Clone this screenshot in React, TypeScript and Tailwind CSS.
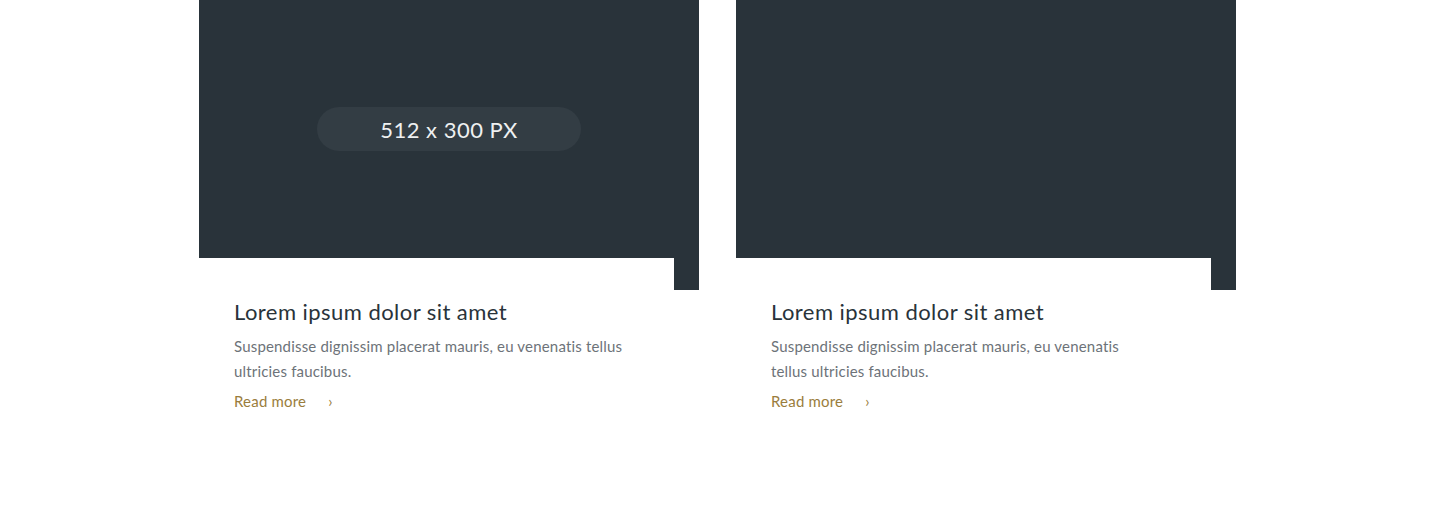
const cards = [
  {
    title: "Lorem ipsum dolor sit amet",
    text: "Suspendisse dignissim placerat mauris, eu venenatis tellus ultricies faucibus.",
    textWidth: "max-w-[400px]",
    label: true,
  },
  {
    title: "Lorem ipsum dolor sit amet",
    text: "Suspendisse dignissim placerat mauris, eu venenatis tellus ultricies faucibus.",
    textWidth: "max-w-[370px]",
    label: false,
  },
];

function Card({ card }: { card: (typeof cards)[number] }) {
  return (
    <div className="w-[500px]">
      <div className="h-[290px] bg-[#29333a] flex items-start justify-center pt-[107px]">
        {card.label && (
          <div className="w-[264px] h-[44px] rounded-full bg-[#333d44] flex items-center justify-center text-[22px] text-[#eef0f1] tracking-[0.5px]">
            512 x 300 PX
          </div>
        )}
      </div>
      <div className="relative -mt-[32px] w-[475px] bg-white pl-[35px] pt-[39px] pb-10">
        <h3 className="text-[22px] leading-[30px] text-[#29333a] tracking-[0.45px]">{card.title}</h3>
        <p className={`mt-[7px] text-[15px] leading-[25px] text-[#6d7379] tracking-[0.18px] ${card.textWidth}`}>
          {card.text}
        </p>
        <a href="#" className="mt-[7px] flex items-center text-[15px] leading-[20px] text-[#9a7d3c] tracking-[0.2px]">
          Read more
          <span className="ml-[22px] text-[15px]">›</span>
        </a>
      </div>
    </div>
  );
}

export default function App() {
  return (
    <div className="w-[1440px] h-[526px] bg-white font-['Lato','Open_Sans',sans-serif]">
      <div className="flex gap-[37px] pl-[199px]">
        {cards.map((c, i) => (
          <Card key={i} card={c} />
        ))}
      </div>
    </div>
  );
}
